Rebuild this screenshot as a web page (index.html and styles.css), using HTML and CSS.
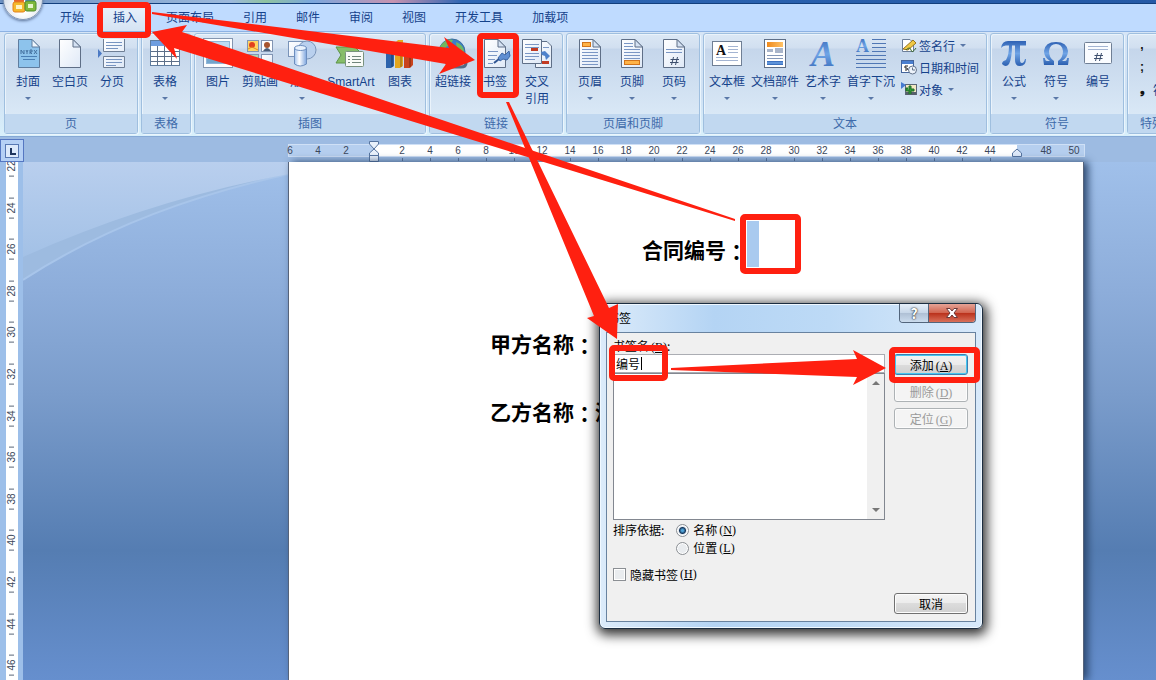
FILE: index.html
```html
<!DOCTYPE html>
<html lang="zh-CN">

<head>
    <meta charset="UTF-8">
    <meta name="viewport" content="width=device-width, initial-scale=1.0">
    <title>书签</title>
    <link rel="stylesheet" href="styles.css">
</head>

<body>
    <svg class="defs" aria-hidden="true">
        <defs>
            <linearGradient id="paper" x1="0" y1="0" x2="1" y2="1">
                <stop offset="0" stop-color="#fff" />
                <stop offset="1" stop-color="#dfe9f7" />
            </linearGradient>
            <linearGradient id="blue" x1="0" y1="0" x2="0" y2="1">
                <stop offset="0" stop-color="#2f62b4" />
                <stop offset="0.5" stop-color="#6fa4e6" />
                <stop offset="1" stop-color="#2b5fb0" />
            </linearGradient>
            <linearGradient id="can" x1="0" y1="0" x2="1" y2="0">
                <stop offset="0" stop-color="#a5c4ee" />
                <stop offset="0.4" stop-color="#fff" />
                <stop offset="1" stop-color="#7ea6df" />
            </linearGradient>
            <linearGradient id="orange" x1="0" y1="0" x2="1" y2="0">
                <stop offset="0" stop-color="#f08a1c" />
                <stop offset="1" stop-color="#ffc266" />
            </linearGradient>
            <symbol id="sheet" viewBox="0 0 32 32">
                <path d="M5.500 1.500H19L26.500 9V29.500H5.500Z" fill="url(#paper)" stroke="#5f6f87" />
                <path d="M19 1.500V9H26.500Z" fill="#d5e2f3" stroke="#5f6f87" />
            </symbol>
        </defs>
    </svg>

    <div class="titlebar"></div>

    <nav class="tabs">
        <button class="tab">开始</button>
        <button class="tab active">插入</button>
        <button class="tab">页面布局</button>
        <button class="tab">引用</button>
        <button class="tab">邮件</button>
        <button class="tab">审阅</button>
        <button class="tab">视图</button>
        <button class="tab">开发工具</button>
        <button class="tab">加载项</button>
    </nav>

    <button class="office" aria-label="Office">
        <svg viewBox="0 -2 38 38">
            <rect x="10" y="11" width="10" height="9" rx="2" fill="#e8642c" />
            <rect x="21" y="10" width="10" height="9" rx="2" fill="#4d86d0" />
            <rect x="9" y="19" width="12" height="10" rx="2" fill="#f5b92c" stroke="#e3801d" />
            <rect x="12" y="22" width="6" height="4" fill="#fff3c4" />
            <rect x="21" y="18" width="11" height="10" rx="2" fill="#7fb83c" stroke="#4d8c2a" />
            <rect x="24" y="21" width="5" height="4" fill="#e6f4c9" />
        </svg>
    </button>

    <div class="ribbon">
        <section class="group">
            <div class="tools">
                <button class="tool">
                    <svg viewBox="0 0 32 32">
                        <path d="M6.500 1.500H20L27.500 9V29.500H6.500Z" fill="#8dc3ec" stroke="#5f7d9f" />
                        <path d="M20 1.500V9H27.500Z" fill="#eef6fd" stroke="#5f7d9f" />
                        <path d="M9 16V12L12 16V12M14 12L15 14L16 12M15 14V16M18 16V12H20V14H18L20 16M22 12L25 16M25 12L22 16" fill="none" stroke="#44719f" />
                        <path d="M9 18.500H25M11 21.500H23" stroke="#4a7fb5" />
                    </svg>
                    <span>封面</span><i class="arrow"></i>
                </button>
                <button class="tool">
                    <svg viewBox="0 0 32 32"><use href="#sheet" /></svg>
                    <span>空白页</span>
                </button>
                <button class="tool">
                    <svg viewBox="0 0 32 32">
                        <path d="M7.500 1V13.500H28.500V1M7.500 29.500V18.500H28.500V29.500Z" fill="url(#paper)" stroke="#6f7f95" />
                        <path d="M10 4.500H26M10 7.500H26M10 10.500H22M10 21.500H26M10 24.500H26M10 27.500H20" stroke="#7794c0" />
                        <path d="M2 11L6 15.500L2 20Z" fill="#4c7ac4" />
                    </svg>
                    <span>分页</span>
                </button>
            </div>
            <h2>页</h2>
        </section>

        <section class="group">
            <div class="tools">
                <button class="tool">
                    <svg viewBox="0 0 32 32">
                        <rect x="1.500" y="2.500" width="29" height="25" fill="#fff" stroke="#5f7d9f" />
                        <rect x="2" y="3" width="28" height="5" fill="#6f9ee0" />
                        <path d="M2 13.500H30M2 18.500H30M2 23.500H30M8.500 8V27M15.500 8V27M22.500 8V27" stroke="#5d6f88" />
                    </svg>
                    <span>表格</span><i class="arrow"></i>
                </button>
            </div>
            <h2>表格</h2>
        </section>

        <section class="group">
            <div class="tools">
                <button class="tool">
                    <svg viewBox="0 0 32 32">
                        <rect x="1.500" y="0.500" width="29" height="29" fill="#fdfeff" stroke="#8496b0" />
                        <rect x="4.500" y="3.500" width="23" height="22" fill="#bddcf4" stroke="#8fb6d8" />
                        <path d="M5 21L12 14L18 19L23 15L27 18V25H5Z" fill="#73a5cc" />
                    </svg>
                    <span>图片</span>
                </button>
                <button class="tool">
                    <svg viewBox="0 0 32 32">
                        <rect x="3.500" y="2.500" width="11" height="11" fill="#ffd563" stroke="#8295b3" />
                        <circle cx="8" cy="7" r="3" fill="#e2401e" />
                        <path d="M4 11L8 9L14 12" stroke="#e58b22" fill="none" />
                        <rect x="17.500" y="2.500" width="11" height="11" fill="#fff" stroke="#8295b3" />
                        <circle cx="23" cy="7" r="3" fill="#a8552f" />
                        <path d="M19 13Q23 7 27 13Z" fill="#4b5e79" />
                        <rect x="3.500" y="16.500" width="11" height="11" fill="#a6d7b7" stroke="#8295b3" />
                        <rect x="17.500" y="16.500" width="11" height="11" fill="url(#paper)" stroke="#8295b3" />
                    </svg>
                    <span>剪贴画</span>
                </button>
                <button class="tool">
                    <svg viewBox="0 0 32 32">
                        <rect x="2.500" y="3.500" width="17" height="15" fill="url(#paper)" stroke="#7993b8" />
                        <circle cx="21" cy="12" r="9" fill="#b9d0ee" stroke="#7993b8" />
                        <path d="M8.500 10V26Q14 30 20.500 26V10Z" fill="url(#can)" stroke="#6c8ebf" />
                        <ellipse cx="14.500" cy="10" rx="6" ry="2.500" fill="#e9f2fd" stroke="#6c8ebf" />
                    </svg>
                    <span>形状</span><i class="arrow"></i>
                </button>
                <button class="tool wide">
                    <svg viewBox="0 0 32 32">
                        <path d="M1 9H20L25 14L20 25H1L6 17Z" fill="#86bd69" stroke="#5c9447" />
                        <rect x="10.500" y="13.500" width="18" height="15" rx="1" fill="#f8fbf7" stroke="#79927f" />
                        <path d="M13 18.500H15M17 18.500H26M13 21.500H15M17 21.500H26M13 24.500H15M17 24.500H26" stroke="#70857b" />
                    </svg>
                    <span>SmartArt</span>
                </button>
                <button class="tool">
                    <svg viewBox="0 0 32 32">
                        <path d="M2 14L5 11H10V28L7 30H2Z" fill="#2d63ac" />
                        <path d="M11 5L14 2H19V28L16 30H11Z" fill="#e3a61f" />
                        <path d="M20 11L23 8H29V27L26 30H20Z" fill="#c9431c" />
                        <path d="M8 13V29M17 5V29M26 12V29" stroke="#0003" stroke-width="2" />
                    </svg>
                    <span>图表</span>
                </button>
            </div>
            <h2>插图</h2>
        </section>

        <section class="group">
            <div class="tools">
                <button class="tool">
                    <svg viewBox="0 0 32 32">
                        <circle cx="15" cy="14" r="13" fill="#3a7fcb" stroke="#3c6e9c" />
                        <path d="M4 7Q10 0 16 2Q14 7 9 9L8 15L3 17Q1 12 4 7ZM19 4Q27 7 27 14L20 12Z" fill="#71b761" />
                        <path d="M14 21H24Q29 21 29 25T24 29H14Q10 29 10 25T14 21Z" fill="none" stroke="#566a85" stroke-width="3" />
                    </svg>
                    <span>超链接</span>
                </button>
                <button class="tool">
                    <svg viewBox="0 0 32 32">
                        <use href="#sheet" />
                        <path d="M9 13.500H19M9 17.500H18M9 21.500H16M9 25.500H14" stroke="#7a96c4" />
                        <path d="M19 20L23 15L26 17L30 13L31 18L28 22L24 21L21 23Z" fill="#5f8ed2" stroke="#3c67a8" />
                        <path d="M15 25L20 21" stroke="#2f5592" stroke-width="2" />
                    </svg>
                    <span>书签</span>
                </button>
                <button class="tool">
                    <svg viewBox="0 0 32 32">
                        <path d="M14.500 3.500H26L30.500 8V29.500H14.500Z" fill="url(#paper)" stroke="#5f6f87" />
                        <path d="M1.500 1.500H20.500V25.500H1.500Z" fill="url(#paper)" stroke="#5f6f87" />
                        <path d="M4 6.500H18M4 9.500H18M4 15.500H18M4 18.500H18M4 21.500H14M22 9.500H28" stroke="#7a96c4" />
                        <rect x="10" y="10" width="7" height="3" fill="#c23a22" />
                        <rect x="21" y="23" width="7" height="3" fill="#c23a22" />
                        <path d="M20 14L24 13L29 18L25 22L24 18L21 17Z" fill="#4f82cb" />
                    </svg>
                    <span>交叉<br>引用</span>
                </button>
            </div>
            <h2>链接</h2>
        </section>

        <section class="group">
            <div class="tools">
                <button class="tool">
                    <svg viewBox="0 0 32 32">
                        <use href="#sheet" />
                        <rect x="8.500" y="4.500" width="8" height="4" fill="#ffb347" stroke="#d2741a" />
                        <path d="M8 11.500H24M8 14.500H24M8 17.500H24M8 20.500H24M8 23.500H24M8 26.500H24" stroke="#7a96c4" />
                    </svg>
                    <span>页眉</span><i class="arrow"></i>
                </button>
                <button class="tool">
                    <svg viewBox="0 0 32 32">
                        <use href="#sheet" />
                        <path d="M8 5.500H17M8 8.500H17M8 11.500H24M8 14.500H24M8 17.500H24M8 20.500H24" stroke="#7a96c4" />
                        <rect x="8.500" y="22.500" width="15" height="4" fill="#ffb347" stroke="#d2741a" />
                    </svg>
                    <span>页脚</span><i class="arrow"></i>
                </button>
                <button class="tool">
                    <svg viewBox="0 0 32 32">
                        <use href="#sheet" />
                        <path d="M8 11.500H24M8 14.500H24" stroke="#7a96c4" />
                        <path d="M15.500 19L13.500 27M19.500 19L17.500 27M12.500 21.500H21M12 24.500H20.500" stroke="#3d4f6e" />
                    </svg>
                    <span>页码</span><i class="arrow"></i>
                </button>
            </div>
            <h2>页眉和页脚</h2>
        </section>

        <section class="group">
            <div class="tools">
                <button class="tool">
                    <svg viewBox="0 0 32 32">
                        <rect x="1.500" y="3.500" width="29" height="24" fill="#fff" stroke="#6f7f95" />
                        <text class="letter" x="5" y="17" font-size="14">A</text>
                        <path d="M17 8.500H27M17 11.500H27M17 14.500H27M5 19.500H27M5 22.500H27" stroke="#a3b4d2" />
                    </svg>
                    <span>文本框</span><i class="arrow"></i>
                </button>
                <button class="tool part">
                    <svg viewBox="0 0 32 32">
                        <rect x="5.500" y="1.500" width="21" height="28" fill="#fff" stroke="#5f6f87" />
                        <rect x="8" y="4" width="16" height="5" fill="url(#orange)" />
                        <path d="M8 11H14V14H8ZM16 10H24V15H16Z" fill="#a9b5ca" />
                        <path d="M8 17.500H24M8 20.500H24" stroke="#8598b9" />
                        <rect x="8" y="23" width="16" height="4" fill="url(#blue)" />
                    </svg>
                    <span>文档部件</span><i class="arrow"></i>
                </button>
                <button class="tool">
                    <svg viewBox="0 0 32 32"><text class="letter art" x="4" y="28" font-size="36">A</text></svg>
                    <span>艺术字</span><i class="arrow"></i>
                </button>
                <button class="tool part">
                    <svg viewBox="0 0 32 32">
                        <text class="letter art plain" x="1" y="14" font-size="18">A</text>
                        <path d="M17 1.500H31M17 5.500H31M17 9.500H31M17 13.500H31M1 17.500H31M1 21.500H31M1 25.500H31M1 29.500H31" stroke="#5077b4" />
                    </svg>
                    <span>首字下沉</span><i class="arrow"></i>
                </button>
                <div class="small-tools">
                    <button class="small">
                        <svg viewBox="0 0 16 16">
                            <path d="M1.500 2.500H9L12.500 6V14.500H1.500Z" fill="#fff" stroke="#6c7e99" />
                            <path d="M2 12L12 3L15 6L7 13Z" fill="#efc845" stroke="#98741e" />
                            <path d="M5 13Q9 9 10 13T15 11" fill="none" stroke="#3c6b2d" />
                        </svg>
                        <span>签名行</span><i class="arrow"></i>
                    </button>
                    <button class="small">
                        <svg viewBox="0 0 16 16">
                            <rect x="0.500" y="1.500" width="12" height="12" fill="#fff" stroke="#44659c" />
                            <rect x="1" y="2" width="11" height="3" fill="#4a7fd0" />
                            <path d="M7 7H4V9H6Q7 10 6 11H4" fill="none" stroke="#222" />
                            <circle cx="11.500" cy="11" r="4" fill="#edf3fb" stroke="#64748c" />
                            <path d="M11.500 8.500V11H14" fill="none" stroke="#64748c" />
                        </svg>
                        <span>日期和时间</span>
                    </button>
                    <button class="small">
                        <svg viewBox="0 0 16 16">
                            <rect x="4.500" y="3.500" width="11" height="10" fill="#f1e7c2" stroke="#5b6777" />
                            <path d="M5 11H15V14H5Z" fill="#55606b" />
                            <path d="M8 13V5H10V8H13V10H10V13M8 10H5V7H7" fill="#2e9d35" stroke="#1f6b27" />
                            <path d="M0 1L5 4L0 8Z" fill="#467bd1" />
                        </svg>
                        <span>对象</span><i class="arrow"></i>
                    </button>
                </div>
            </div>
            <h2>文本</h2>
        </section>

        <section class="group">
            <div class="tools">
                <button class="tool">
                    <svg viewBox="0 0 32 32">
                        <path d="M3 10Q4 3 10 3H28V7.500H22V22Q22 25 24 25T27 21H28Q28 28 22 28Q17 28 17 22V7.500H14Q14 20 11 26Q8 30 4 26Q4 23 8 22Q11 17 11 7.500H9Q5 7 3 10Z" fill="url(#blue)" />
                    </svg>
                    <span>公式</span><i class="arrow"></i>
                </button>
                <button class="tool">
                    <svg viewBox="0 0 32 32">
                        <path d="M3 20H5Q5 23 7 23H10Q4 19 4 13Q5 4 16 4T28 13Q28 19 22 23H25Q27 23 27 20H29L28 27H18V23Q23 20 23 13Q22 6 16 6T9 13Q9 20 14 23V27H4Z" fill="url(#blue)" />
                    </svg>
                    <span>符号</span><i class="arrow"></i>
                </button>
                <button class="tool">
                    <svg viewBox="0 0 32 32">
                        <rect x="2.500" y="4.500" width="27" height="21" rx="1" fill="#fafcff" stroke="#6f7f95" />
                        <path d="M6 8.500H26M6 11.500H26" stroke="#a3b4d2" />
                        <path d="M15.500 15L13.500 23M19.500 15L17.500 23M12.500 17.500H21M12 20.500H20.500" stroke="#3d4f6e" />
                    </svg>
                    <span>编号</span>
                </button>
            </div>
            <h2>符号</h2>
        </section>

        <section class="group special">
            <div class="tools">
                <div class="small-tools">
                    <button class="small"><b>,</b></button>
                    <button class="small"><b>;</b></button>
                    <button class="small"><b>❟</b><span>符号</span><i class="arrow"></i></button>
                </div>
            </div>
            <h2>特殊符号</h2>
        </section>
    </div>

    <div class="ruler-row">
        <button class="tab-stop" aria-label="制表符">
            <svg viewBox="0 0 14 14">
                <rect x="0.500" y="0.500" width="13" height="13" fill="#dce9fb" stroke="#5778b3" />
                <path d="M6 4V10H11" fill="none" stroke="#1e355e" stroke-width="2" />
            </svg>
        </button>
        <div class="ruler">
            <div class="numbers">
                <span>6</span><span>4</span><span>2</span><span></span>
                <span class="tick">2</span><span class="tick">4</span><span class="tick">6</span><span class="tick">8</span>
                <span class="tick">10</span><span class="tick">12</span><span class="tick">14</span><span class="tick">16</span>
                <span class="tick">18</span><span class="tick">20</span><span class="tick">22</span><span class="tick">24</span>
                <span class="tick">26</span><span class="tick">28</span><span class="tick">30</span><span class="tick">32</span>
                <span class="tick">34</span><span class="tick">36</span><span class="tick">38</span><span class="tick">40</span>
                <span class="tick">42</span><span class="tick">44</span><span></span><span>48</span><span>50</span>
            </div>
            <svg class="indent first" viewBox="0 0 10 22">
                <path d="M0.500 0.500H9.500V3L5 8L0.500 3ZM5 8L9.500 12V14.500H0.500V12ZM0.500 14.500H9.500V20.500H0.500Z" fill="#e9f1fb" stroke="#56749f" />
            </svg>
            <svg class="indent last" viewBox="0 0 10 10">
                <path d="M5 1L9.500 5V8.500H0.500V5Z" fill="#dfeafa" stroke="#56749f" />
            </svg>
        </div>
    </div>

    <main class="workspace">
        <div class="side-ruler">
            <div class="side-numbers">
                <span>22</span><span>24</span><span>26</span><span>28</span><span>30</span><span>32</span><span>34</span>
                <span>36</span><span>38</span><span>40</span><span>42</span><span>44</span><span>46</span>
            </div>
        </div>
        <div class="desk">
            <svg class="swoosh" viewBox="0 0 266 120" aria-hidden="true">
                <defs>
                    <linearGradient id="glow" x1="0" y1="0" x2="0" y2="1">
                        <stop offset="0" stop-color="#b9cfee" />
                        <stop offset="1" stop-color="#a3c1e6" />
                    </linearGradient>
                </defs>
                <path d="M0 0H266V12Q110 46 0 118Z" fill="#9dbbe0" />
                <path d="M266 12Q110 46 0 118" fill="none" stroke="#a8c5ea" stroke-width="2" />
                <path d="M0 0H266V12Q130 37 0 95Z" fill="url(#glow)" />
            </svg>
            <article class="page">
                <p class="line number">合同编号<span class="colon" lang="zh-TW">：</span><mark></mark></p>
                <p class="line party">甲方名称<span class="colon" lang="zh-TW">：</span></p>
                <p class="line party second">乙方名称<span class="colon" lang="zh-TW">：</span>深</p>
            </article>
        </div>
    </main>

    <form class="dialog" role="dialog" aria-label="书签">
        <header class="dialog-title">
            <span>书签</span>
            <div class="window-buttons">
                <button type="button" class="help" aria-label="帮助">?</button>
                <button type="button" class="close" aria-label="关闭">
                    <svg viewBox="0 0 14 12">
                        <path d="M1.500 1.500H5L7 4L9 1.500H12.500L9 6L12.500 10.500H9L7 8L5 10.500H1.500L5 6Z" fill="#fff" stroke="#6b3a3a" />
                    </svg>
                </button>
            </div>
        </header>
        <div class="dialog-body">
            <div class="fields">
                <label class="name-label" for="name">书签名<kbd>(<u>B</u>)</kbd>:</label>
                <div class="name-box">
                    <input id="name" type="text" value="编号">
                    <i class="caret"></i>
                </div>
                <div class="list-box">
                    <select size="8" aria-label="书签列表"></select>
                    <div class="scrollbar"><i class="up"></i><i class="down"></i></div>
                </div>
                <div class="sort">
                    <span>排序依据:</span>
                    <div class="options">
                        <label><input type="radio" name="sort" checked>名称<kbd>(<u>N</u>)</kbd></label>
                        <label><input type="radio" name="sort">位置<kbd>(<u>L</u>)</kbd></label>
                    </div>
                </div>
                <label class="hidden-marks"><input type="checkbox">隐藏书签<kbd>(<u>H</u>)</kbd></label>
            </div>
            <div class="actions">
                <button type="button" class="btn default">添加<kbd>(<u>A</u>)</kbd></button>
                <button type="button" class="btn" disabled>删除<kbd>(<u>D</u>)</kbd></button>
                <button type="button" class="btn" disabled>定位<kbd>(<u>G</u>)</kbd></button>
                <button type="button" class="btn cancel">取消</button>
            </div>
        </div>
    </form>

    <!-- step marks over the window -->
    <svg class="marks" width="1156" height="680" viewBox="0 0 1156 680" aria-hidden="true">
        <g class="boxes">
            <rect x="100" y="5" width="48" height="30" rx="2" />
            <rect x="480" y="36" width="36" height="59" rx="2" />
            <rect x="743" y="217" width="55" height="54" rx="2" />
            <rect x="612" y="348" width="53" height="30" rx="2" />
            <rect x="892" y="350" width="85" height="30" rx="2" />
        </g>
        <g class="arrows">
            <path d="M152 12L449 48L444 37L475 60L439 74L446 64L152 14Z" />
            <path d="M735 219L182 32L187 25L152 32L177 59L174 48L735 221Z" />
            <path d="M509 102L609 308L618 304L617 339L587 318L594 316L506 102Z" />
            <path d="M671 368L857 359L853 350L886 368L853 385L857 377L671 370Z" />
        </g>
    </svg>
</body>

</html>
```

FILE: styles.css
```css
/* Reset */
* {
    box-sizing: border-box;
}

body,
h2,
p {
    margin: 0;
}

body {
    position: relative;
    display: flex;
    flex-direction: column;
    height: 100vh;
    overflow: hidden;
    font-family: "Liberation Sans", "Noto Sans CJK SC", sans-serif;
    font-size: 12px;
    color: #15428b;
    background-color: #bfdbff;
}

button,
input,
select {
    margin: 0;
    padding: 0;
    border: 0;
    font: inherit;
    color: inherit;
    background: none;
}

.defs {
    position: absolute;
    width: 0;
    height: 0;
}

/* Title bar and tabs */
.titlebar {
    flex: none;
    height: 4px;
    background: linear-gradient(90deg, #6d93c5, #9db9dc 20%, #8fc3a0 23%, #7ba7dd 27%, #c793b0 34%, #2d66b4 40%, #2459a6);
    border-bottom: 1px solid #123f7d;
}

.tabs {
    flex: none;
    display: flex;
    gap: 5px;
    height: 27px;
    padding-left: 48px;
    background-color: #bfdbff;
}

.tab {
    padding: 0 12px;
    line-height: 26px;
    white-space: nowrap;
}

.tab.active {
    background: linear-gradient(#e9f2fc, #d5e3f3);
    border: 1px solid #9db8dc;
    border-bottom: 0;
    padding: 0 11px;
    border-radius: 3px 3px 0 0;
}

.office {
    position: absolute;
    top: -20px;
    left: 3px;
    width: 40px;
    height: 40px;
    border: 1px solid #8296b3;
    border-radius: 50%;
    background: radial-gradient(circle at 50% 70%, #fff 20%, #dbe2ec 60%, #aab7ca);
    box-shadow: 0 1px 3px #5a7096;
}

.office svg {
    display: block;
    width: 38px;
    height: 38px;
}

/* Ribbon */
.ribbon {
    flex: none;
    display: flex;
    gap: 3px;
    padding: 1px 4px 2px;
    overflow: hidden;
    background: linear-gradient(#d6e5f6, #cfe1f4 60%, #d9f0fb);
    border-top: 1px solid #8db2e3;
    border-bottom: 1px solid #86a9d6;
}

.group {
    flex: none;
    display: flex;
    flex-direction: column;
    border: 1px solid #9fbfdf;
    border-radius: 3px;
    background: linear-gradient(#dce8f5, #d1dff0 14px, #c5d6eb 15px, #d9e8f6 80px);
    box-shadow: inset 1px 1px 0 #eaf3fb, 1px 1px 0 #eaf5fd;
}

.group h2 {
    height: 19px;
    line-height: 20px;
    font-size: 12px;
    font-weight: 400;
    text-align: center;
    color: #3e6aaa;
    background-color: #c1d8f0;
}

.tools {
    display: flex;
    height: 80px;
    padding: 4px 4px 0 2px;
}

.tool {
    display: flex;
    flex-direction: column;
    align-items: center;
    width: 42px;
    white-space: nowrap;
}

.tool.wide {
    width: 56px;
}

.tool.part {
    width: 54px;
}

.tool svg {
    flex: none;
    width: 32px;
    height: 32px;
    overflow: visible;
}

.tool span {
    margin-top: 4px;
    line-height: 17px;
}

.arrow {
    flex: none;
    width: 0;
    height: 0;
    border: 3px solid transparent;
    border-top-color: #5a78a8;
    border-bottom: 0;
}

.tool .arrow {
    margin-top: 6px;
}

.letter {
    font-family: "Liberation Serif", serif;
    font-weight: 700;
    fill: #111;
}

.letter.art {
    font-style: italic;
    fill: url(#blue);
}

.letter.plain {
    font-style: normal;
}

.small-tools {
    display: flex;
    flex-direction: column;
    width: 84px;
    margin-top: -4px;
    padding-left: 3px;
}

.small {
    display: flex;
    align-items: center;
    gap: 2px;
    height: 22px;
    white-space: nowrap;
}

.small svg {
    flex: none;
    width: 16px;
    height: 16px;
}

.small .arrow {
    margin-left: 3px;
}

.special {
    width: 74px;
}

.special .small b {
    width: 18px;
    color: #111;
}

/* Horizontal ruler */
.ruler-row {
    flex: none;
    display: flex;
    height: 25px;
    background-color: #9dbbe2;
}

.tab-stop {
    flex: none;
    width: 24px;
    margin-top: 2px;
    border: 1px solid #5577c2;
    background-color: #b5d0f5;
}

.tab-stop svg {
    display: block;
    width: 14px;
    height: 14px;
    margin: auto;
}

.ruler {
    position: relative;
    flex: none;
    width: 797px;
    height: 13px;
    margin: 7px 0 0 264px;
    background: linear-gradient(90deg, #b6cfef 86px, #fff 86px, #fff 728px, #b6cfef 728px);
    border: 1px solid #cfe0f6;
}

.numbers {
    display: flex;
    margin-left: -13px;
    font-size: 10px;
    line-height: 11px;
    color: #3b475b;
    text-align: center;
}

.numbers span {
    flex: none;
    width: 28px;
}

.tick::after {
    content: '';
    display: block;
    width: 1px;
    height: 3px;
    margin: 2px auto 0;
    background-color: #5c7396;
}

.indent {
    position: absolute;
    width: 10px;
}

.first {
    top: -4px;
    left: 80px;
    height: 22px;
}

.last {
    top: 3px;
    left: 723px;
    height: 10px;
}

/* Workspace */
.workspace {
    flex: 1;
    display: flex;
    min-height: 0;
}

.side-ruler {
    flex: none;
    width: 23px;
    padding: 0 5px 0 6px;
    overflow: hidden;
    background-color: #9dbfe9;
}

.side-numbers {
    display: flex;
    flex-direction: column;
    width: 12px;
    height: calc(100% + 23px);
    margin-top: -17px;
    font-size: 10px;
    line-height: 12px;
    color: #3b475b;
    background-color: #fff;
}

.side-numbers span {
    flex: 1;
    display: flex;
    align-items: center;
    justify-content: center;
    gap: 4px;
    writing-mode: vertical-rl;
    transform: rotate(180deg);
}

.side-numbers span::before,
.side-numbers span::after {
    content: '';
    width: 5px;
    height: 1px;
    background-color: #5b6678;
}

.desk {
    position: relative;
    flex: 1;
    display: flex;
    min-width: 0;
    padding-left: 265px;
    background: linear-gradient(#a0c0ea, #8dadda 25%, #7a9ccb 45%, #557db2 75%, #668fce);
}

.swoosh {
    position: absolute;
    top: 0;
    left: 0;
    width: 266px;
    height: 120px;
}

.page {
    position: relative;
    flex: none;
    width: 796px;
    padding-top: 59px;
    background-color: #fff;
    border-left: 1px solid #56637a;
    border-right: 1px solid #56637a;
    box-shadow: 4px 0 8px #2c486f;
}

.line {
    display: flex;
    font-size: 21px;
    font-weight: 700;
    line-height: 32px;
    color: #000;
}

.colon {
    font-family: "Noto Sans CJK TC", sans-serif;
    text-spacing-trim: space-all;
}

.number {
    align-items: flex-end;
    padding-left: 353px;
}

.number mark {
    width: 12px;
    height: 46px;
    background-color: #a9caef;
}

.party {
    margin-top: 62px;
    padding-left: 201px;
}

.second {
    margin-top: 36px;
}

/* Bookmark dialog */
.dialog {
    position: absolute;
    top: 303px;
    left: 599px;
    width: 384px;
    padding: 0 6px 6px;
    color: #000;
    font-family: "Noto Sans CJK SC", sans-serif;
    background: linear-gradient(90deg, #dcebfa, #b4d4f4 30%, #bddaf6 60%, #d8e9fa);
    border: 1px solid #1c2d40;
    border-radius: 6px;
    box-shadow: inset 0 0 0 1px #f0f8ff, 1px 3px 12px 3px rgba(0, 0, 0, 0.8);
}

.dialog-title {
    display: flex;
    justify-content: space-between;
    height: 28px;
    line-height: 28px;
    padding-left: 1px;
}

.window-buttons {
    display: flex;
    height: 19px;
    border: 1px solid #52657c;
    border-top: 0;
    border-radius: 0 0 4px 4px;
    overflow: hidden;
}

.help {
    width: 28px;
    font-size: 14px;
    font-weight: 700;
    line-height: 18px;
    color: #fff;
    text-shadow: 0 0 1px #222, 0 0 2px #222;
    background: linear-gradient(#e6eff9, #c6d6e8 50%, #aebfd4 50%, #cbdcee);
}

.close {
    width: 47px;
    border-left: 1px solid #52657c;
    background: linear-gradient(#e5a396, #d1634e 50%, #b9301a 50%, #d9705a);
}

.close svg {
    display: block;
    width: 14px;
    height: 12px;
    margin: auto;
}

.dialog-body {
    display: flex;
    gap: 9px;
    padding: 4px 7px 7px 6px;
    background-color: #f0f0f0;
    border: 1px solid #68829f;
}

.fields {
    flex: 1;
    min-width: 0;
}

kbd {
    margin-left: 2px;
    font-family: "Liberation Serif", serif;
    font-size: 12px;
}

.name-label {
    display: block;
    height: 17px;
    line-height: 17px;
}

.name-box {
    position: relative;
    height: 19px;
    background-color: #fff;
    border: 1px solid #abadb3;
}

.name-box input {
    display: block;
    width: 100%;
    height: 17px;
    padding-left: 2px;
    line-height: 17px;
}

.caret {
    position: absolute;
    top: 2px;
    left: 27px;
    width: 1px;
    height: 13px;
    background-color: #000;
}

.list-box {
    display: flex;
    height: 147px;
    background-color: #fff;
    border: 1px solid #828790;
}

.list-box select {
    flex: 1;
    min-width: 0;
    overflow: hidden;
    outline: 0;
}

.scrollbar {
    display: flex;
    flex-direction: column;
    justify-content: space-between;
    align-items: center;
    width: 17px;
    padding: 7px 0;
    background-color: #f0f0f0;
}

.up,
.down {
    border: 4px solid transparent;
}

.up {
    border-top: 0;
    border-bottom-color: #777;
}

.down {
    border-bottom: 0;
    border-top-color: #777;
}

.sort {
    display: flex;
    gap: 12px;
    line-height: 18px;
    margin-top: 1px;
}

.options {
    display: flex;
    flex-direction: column;
}

.options label,
.hidden-marks {
    display: flex;
    align-items: center;
    height: 18px;
}

.options input,
.hidden-marks input {
    appearance: none;
    flex: none;
    width: 13px;
    height: 13px;
    margin-right: 4px;
    background-color: #e9ecef;
    border: 1px solid #8b8f94;
    box-shadow: inset 0 0 0 1px #fff;
}

.options input {
    border-radius: 50%;
}

.options input:checked {
    background: radial-gradient(circle, #4fa3d8 1px, #16375c 3px, #e2e8ee 4px);
}

.hidden-marks {
    margin-top: 8px;
}

.actions {
    flex: none;
    display: flex;
    flex-direction: column;
    gap: 6px;
    width: 74px;
    padding-top: 17px;
}

.btn {
    height: 21px;
    line-height: 19px;
    border: 1px solid #707070;
    border-radius: 3px;
    background: linear-gradient(#f4f4f4, #ebebeb 50%, #dcdcdc 50%, #d0d0d0);
    box-shadow: inset 0 0 0 1px #fcfcfc;
}

.btn.default {
    border-color: #3c7fb1;
    box-shadow: inset 0 0 0 1px #46c6f0;
}

.btn:disabled {
    color: #9a9a9a;
    background: #f4f4f4;
    border-color: #adb2b5;
}

.cancel {
    margin-top: 158px;
}

/* Step marks */
.marks {
    position: absolute;
    top: 0;
    left: 0;
    pointer-events: none;
}

.boxes {
    fill: none;
    stroke: #ff2010;
    stroke-width: 6px;
}

.arrows {
    fill: #ff2010;
}
```
